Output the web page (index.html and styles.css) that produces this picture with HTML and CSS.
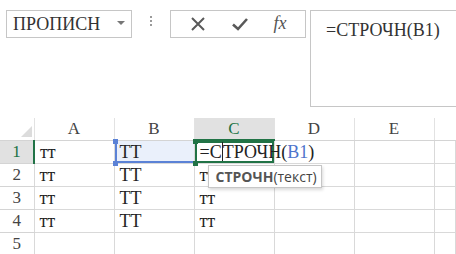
FILE: index.html
```html
<!doctype html>
<html lang="ru">
    <head>
        <meta charset="UTF-8" />
        <meta name="viewport" content="width=device-width, initial-scale=1.0" />
        <title>СТРОЧН</title>
        <link rel="stylesheet" href="styles.css">
    </head>
    <body>
        <div class="bar">
            <div class="namebox">
                <span>ПРОПИСН</span>
                <span class="arrow"></span>
            </div>
            <div class="dots"><i></i><i></i><i></i></div>
            <div class="buttons">
                <svg width="16" height="16" viewBox="0 0 16 16">
                    <path d="M2 2 L14 14 M14 2 L2 14" stroke="#595959" stroke-width="2" fill="none" />
                </svg>
                <svg width="18" height="16" viewBox="0 0 18 16">
                    <path d="M2 8.5 L7 13 L16 3" stroke="#595959" stroke-width="2.6" fill="none" />
                </svg>
                <span class="fx">fx</span>
            </div>
            <div class="formula">=СТРОЧН(B1)</div>
        </div>

        <table class="grid">
            <colgroup>
                <col class="c-head" />
                <col class="c-col" /><col class="c-col" /><col class="c-col" />
                <col class="c-col" /><col class="c-col" /><col />
            </colgroup>
            <thead>
                <tr>
                    <th class="corner"><span class="tri"></span></th>
                    <th>A</th>
                    <th>B</th>
                    <th class="active-col">C</th>
                    <th>D</th>
                    <th>E</th>
                    <th></th>
                </tr>
            </thead>
            <tbody>
                <tr>
                    <th class="active-row">1</th>
                    <td>тт</td>
                    <td class="ref">ТТ<i class="sq sq-top"></i><i class="sq sq-bot"></i></td>
                    <td class="edit">=С<span class="caret"></span>ТРОЧН(<span class="blue">B1</span>)<i class="sq sq-top"></i><i class="sq sq-bot"></i>
                        <div class="tip"><b>СТРОЧН</b>(текст)</div>
                    </td>
                    <td></td><td></td><td></td>
                </tr>
                <tr>
                    <th>2</th><td>тт</td><td>ТТ</td><td>тт</td><td></td><td></td><td></td>
                </tr>
                <tr>
                    <th>3</th><td>тт</td><td>ТТ</td><td>тт</td><td></td><td></td><td></td>
                </tr>
                <tr>
                    <th>4</th><td>тт</td><td>ТТ</td><td>тт</td><td></td><td></td><td></td>
                </tr>
                <tr>
                    <th>5</th><td></td><td></td><td></td><td></td><td></td><td></td>
                </tr>
            </tbody>
        </table>
    </body>
</html>
```

FILE: styles.css
```css
body {
    margin: 0;
    font-family: "Liberation Serif", serif;
    color: #222;
    background: #fff;
    overflow: hidden;
}
.bar {
    display: flex;
    align-items: flex-start;
    padding: 10px 0 0 6px;
    height: 107px;
    box-sizing: border-box;
}
.namebox {
    flex-shrink: 0;
    width: 126px;
    height: 28px;
    box-sizing: border-box;
    border: 1px solid #c6c6c6;
    display: flex;
    align-items: center;
    justify-content: space-between;
    padding: 0 6px 0 6px;
    font-size: 18px;
    color: #333;
}
.arrow {
    width: 0;
    height: 0;
    border-left: 4px solid transparent;
    border-right: 4px solid transparent;
    border-top: 4px solid #777;
    margin-top: -2px;
}
.dots {
    flex-shrink: 0;
    width: 38px;
    display: flex;
    flex-direction: column;
    align-items: center;
    gap: 2px;
    padding-top: 6px;
}
.dots i {
    width: 2px;
    height: 2px;
    background: #9a9a9a;
}
.buttons {
    flex-shrink: 0;
    width: 136px;
    height: 28px;
    box-sizing: border-box;
    border: 1px solid #c6c6c6;
    display: flex;
    align-items: center;
    justify-content: space-around;
    padding: 0 6px;
}
.fx {
    font-style: italic;
    font-size: 18px;
    color: #555;
    margin-top: -2px;
}
.formula {
    flex: 1;
    margin-left: 4px;
    height: 97px;
    box-sizing: border-box;
    border: 1px solid #c6c6c6;
    border-right: none;
    padding: 8px 0 0 15px;
    font-size: 18px;
    color: #333;
    line-height: 22px;
}
.grid {
    border-collapse: collapse;
    table-layout: fixed;
    width: 456px;
    margin-top: 11px;
}
.c-head { width: 34px; }
.c-col { width: 80px; }
.grid th {
    font-weight: normal;
    font-size: 17px;
    color: #444;
    height: 21px;
    padding: 0;
    border-left: 1px solid #d4d4d4;
    border-bottom: 1px solid #d4d4d4;
    text-align: center;
}
.grid thead th {
    border-left-color: #e2e2e2;
}
.grid thead th.corner {
    border-left: none;
    position: relative;
}
.tri {
    position: absolute;
    right: 2px;
    bottom: 3px;
    width: 0;
    height: 0;
    border-left: 11px solid transparent;
    border-bottom: 11px solid #dcdcdc;
}
.grid tbody th {
    border-left: none;
    height: 22px;
}
.grid td {
    height: 22px;
    padding: 0 0 0 5px;
    border: 1px solid #d9d9d9;
    font-size: 18px;
    white-space: nowrap;
    overflow: visible;
    vertical-align: bottom;
    line-height: 22px;
}
.grid th.active-col {
    background: #e1e1e1;
    color: #217346;
    border-bottom: 2px solid #217346;
}
.grid th.active-row {
    background: #e1e1e1;
    color: #217346;
    border-right: 2px solid #217346;
}
.ref {
    background: #eaf0fb;
    position: relative;
    box-shadow: inset 2px 0 0 #5b82d6, inset 0 -2px 0 #5b82d6;
}
.edit {
    position: relative;
    box-shadow: inset 0 0 0 2px #217346;
    padding-left: 3px;
}
.sq {
    position: absolute;
    width: 5px;
    height: 5px;
    left: -2px;
    z-index: 2;
}
.ref .sq { background: #5b82d6; }
.edit .sq { background: #217346; }
.sq-top { top: -2px; }
.sq-bot { bottom: -3px; }
.caret {
    display: inline-block;
    width: 1px;
    height: 19px;
    background: #222;
    vertical-align: -3px;
}
.blue { color: #4d74cc; }
.tip {
    position: absolute;
    left: 13px;
    top: 24px;
    padding: 0 4px 0 7px;
    height: 21px;
    line-height: 21px;
    background: #fff;
    border: 1px solid #c6c6c6;
    box-shadow: 1px 2px 3px rgba(0, 0, 0, 0.15);
    font-family: "Open Sans", sans-serif;
    font-size: 14px;
    color: #444;
    z-index: 3;
}
.tip b {
    color: #555;
}
```
